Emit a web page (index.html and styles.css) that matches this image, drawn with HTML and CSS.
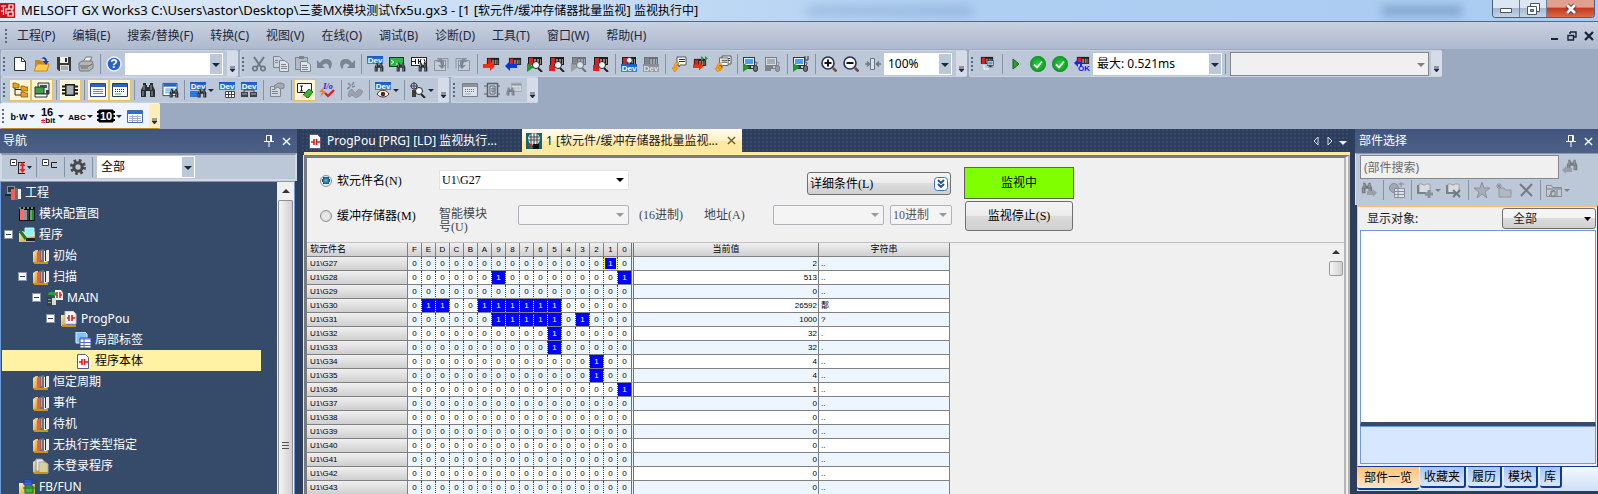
FILE: index.html
```
<!DOCTYPE html>
<html lang="zh-CN">
<head>
<meta charset="utf-8">
<title>MELSOFT GX Works3</title>
<link rel="stylesheet" href="styles.css">
</head>
<body>
<svg class="paints" aria-hidden="true">
  <defs>
    <linearGradient id="gold" x1="0" y1="0" x2="1" y2="1"><stop offset="0" stop-color="#fff0b0"/><stop offset="1" stop-color="#c9921c"/></linearGradient>
    <linearGradient id="blue" x1="0" y1="0" x2="0" y2="1"><stop offset="0" stop-color="#1d56c8"/><stop offset="1" stop-color="#2b8af0"/></linearGradient>
    <radialGradient id="green"><stop offset="0" stop-color="#2fd040"/><stop offset="1" stop-color="#0a9c22"/></radialGradient>
  </defs>
</svg>
<svg class="defs" aria-hidden="true">
  <symbol id="lens" viewBox="0 0 16 16"><path d="M11 12l4 4" stroke="#222" stroke-width="2"/><circle cx="9" cy="9" r="3.5" fill="#f4fbff" stroke="#222"/></symbol>
  <symbol id="bino" viewBox="0 0 16 16"><path d="M3 1h3v2h1v2h2V3h1V1h3v3l2 4v7h-5V9H6v6H1V8l2-4z" fill="#2a2d33"/><path d="M4 3v5M11 3v5M3 9v5M12 9v5" stroke="#9aa0a8"/></symbol>
  <symbol id="mod" viewBox="0 0 16 16"><path d="M1 1h14v8H1z" fill="#1c1c1c"/><path d="M2 2h4v7H2z" fill="#e02020"/><path d="M7 3h2v5H7zM10 3h2v5h-2zM13 3h1v5h-1z" fill="#8d8577"/></symbol>
  <symbol id="dev" viewBox="0 0 16 16"><path d="M0 0h16v8H0z" fill="url(#blue)"/><text x="8" y="7" text-anchor="middle" class="t-dev">Dev</text></symbol>
  <symbol id="pc" viewBox="0 0 16 16"><path d="M0 1h12v9H0zM4 10h4v2H4zM2 12h9v1H2z" fill="#30343c"/><path d="M1 2h10v7H1z" fill="#e8f2ff"/><path d="M2 3h8v5H2z" fill="#4aa0f0"/></symbol>
  <symbol id="sheets" viewBox="0 0 16 16"><path d="M6 1h9v8H9l-1 2V9H6z" fill="#fff" stroke="#555"/><path d="M8 3.500h6M8 5.500h6" stroke="#333"/><path d="M7 6C4 6 3 9 3 12H1l3 4 3-4H5c0-2 0-4 3-4z" fill="#ffb000" stroke="#e06a00" stroke-width=".6"/></symbol>
  <symbol id="new" viewBox="0 0 16 16"><path d="M2.500 1.500h7l4 4v9h-11z" fill="#fff" stroke="#333"/><path d="M9.500 1.500v4h4" fill="none" stroke="#333"/></symbol>
  <symbol id="open" viewBox="0 0 16 16"><path d="M1 4h5l1 1h6v10H1z" fill="#c98a14"/><path d="M0 15l3-7h12l-2 7z" fill="#ffc94e" stroke="#c98a14"/><path d="M7 3c2-3 6-2 6 2h2l-3 4-3-4h2c0-2-2-3-4-2z" fill="#1d3fae"/></symbol>
  <symbol id="save" viewBox="0 0 16 16"><path d="M1 1h14v14H3l-2-2z" fill="#3a3a34"/><path d="M4 1h8v6H4z" fill="#f0f0ea"/><path d="M9 2h2v4H9z" fill="#2a2a2a"/><path d="M4 9h9v6H4z" fill="#ddd"/><path d="M5 11h7M5 13h7" stroke="#777"/></symbol>
  <symbol id="print" viewBox="0 0 16 16"><path d="M5 6l3-5h6l-3 6z" fill="#eee" stroke="#777"/><path d="M1 7l3-2h10l1 3v4l-4 3H2l-1-2z" fill="#b4b4b4" stroke="#777"/><path d="M2 10h9l3-2M3 12h7" stroke="#666" fill="none"/></symbol>
  <symbol id="help" viewBox="0 0 16 16"><circle cx="8" cy="8" r="7" fill="#2860c8" stroke="#e8f0ff" stroke-width="1.500"/><text x="8" y="12" text-anchor="middle" class="t-help">?</text></symbol>
  <symbol id="cut" viewBox="0 0 16 16"><path d="M3 1l7 10M13 1L6 11" stroke="#707783" stroke-width="2"/><circle cx="4" cy="12.500" r="2.200" fill="none" stroke="#707783" stroke-width="1.700"/><circle cx="12" cy="12.500" r="2.200" fill="none" stroke="#707783" stroke-width="1.700"/></symbol>
  <symbol id="copy" viewBox="0 0 16 16"><path d="M.5.500h6l3 3v8h-9z" fill="#cdd3dc" stroke="#7d8592"/><path d="M6.500 4.500h5l4 3v8h-9z" fill="#dde2e9" stroke="#7d8592"/><path d="M8 8.500h5M8 10.500h6M8 12.500h6M2 4.500h3M2 6.500h3" stroke="#7d8592"/></symbol>
  <symbol id="paste" viewBox="0 0 16 16"><path d="M.5 1.500h12v12H.5z" fill="#b3bac5" stroke="#7d8592"/><path d="M4 0h5v3H4z" fill="#7d8592"/><path d="M5.500 5.500h6l4 3v7h-10z" fill="#dde2e9" stroke="#7d8592"/><path d="M7 9.500h5M7 11.500h6M7 13.500h6" stroke="#7d8592"/></symbol>
  <symbol id="undo" viewBox="0 0 16 16"><path d="M0 4v8h8L5.500 9.500C8 6 12 7 12 12l1 1c4-5 1-11-4-10C6 3 4 5 3 7z" fill="#7b8492"/></symbol>
  <symbol id="code" viewBox="0 0 16 16"><path d="M0 1h15v10H0z" fill="#123b1a"/><path d="M1 2h13v8H1z" fill="#28b845"/><path d="M2 4l3 2-3 2M7 8h4" stroke="#fff" fill="none"/></symbol>
  <symbol id="ladder" viewBox="0 0 16 16"><path d="M0 1h16v9H0z" fill="#222"/><path d="M1 2h14v7H1z" fill="#fff"/><path d="M1 5.500h3M4.500 3v5M7.500 3v5M8 5.500h2M10 3l-1 2.500 1 2.500M13 3l1 2.500-1 2.500" stroke="#111" fill="none"/></symbol>
  <symbol id="hist" viewBox="0 0 16 16"><path d="M1.500 4.500h11v10h-11z" fill="#c6ccd6" stroke="#8d95a2"/><path d="M4 2.500h11v10" fill="none" stroke="#8d95a2"/><path d="M3 6c2-4 7-4 8 0v3h2l-4 4-4-4h3c0-3-2-4-5-3z" fill="#7f8794"/></symbol>
  <symbol id="right" viewBox="0 0 16 16"><path d="M0 9h7V6l5 5-5 5v-3H0z" fill="#f23010"/></symbol>
  <symbol id="left" viewBox="0 0 16 16"><path d="M12 9H5V6l-5 5 5 5v-3h7z" fill="#0a36e0"/></symbol>
  <symbol id="play" viewBox="0 0 16 16"><path d="M0 7l7 4-7 5z" fill="#1d9a2a"/></symbol>
  <symbol id="stop" viewBox="0 0 16 16"><path d="M0 9h6v6H0z" fill="#f01818"/></symbol>
  <symbol id="mouse" viewBox="0 0 16 16"><path d="M12 6c3 0 2 2 1 3" stroke="#444" fill="none"/><rect x="10.500" y="9.500" width="4" height="6" rx="2" fill="#6a6f78" stroke="#333"/></symbol>
  <symbol id="zin" viewBox="0 0 16 16"><path d="M12 12l3.500 3.500" stroke="#7a4f2a" stroke-width="2.500"/><circle cx="7" cy="7" r="6" fill="#f6f8fb" stroke="#2b2f55" stroke-width="1.600"/><path d="M3.500 7h7M7 3.500v7" stroke="#111" stroke-width="2"/></symbol>
  <symbol id="zout" viewBox="0 0 16 16"><path d="M12 12l3.500 3.500" stroke="#7a3f5a" stroke-width="2.500"/><circle cx="7" cy="7" r="6" fill="#f6f8fb" stroke="#2b2f55" stroke-width="1.600"/><path d="M3.500 7h7" stroke="#111" stroke-width="2"/></symbol>
  <symbol id="fit" viewBox="0 0 16 16"><path d="M5.500 2.500h4v11h-4z" fill="#dde2e9" stroke="#6c7480"/><path d="M0 8h4M2 5.500L4.500 8 2 10.500M16 8h-4M14 5.500L11.500 8l2.500 2.500" stroke="#6c7480" fill="none" stroke-width="1.400"/></symbol>
  <symbol id="run" viewBox="0 0 16 16"><path d="M5 3l6 5-6 5z" fill="#2f9a28" stroke="#14601a"/></symbol>
  <symbol id="ok" viewBox="0 0 16 16"><circle cx="8" cy="8" r="7.700" fill="url(#green)" stroke="#088020" stroke-width=".6"/><path d="M4 8.500l3 3 5-6" fill="none" stroke="#fff" stroke-width="1.800"/></symbol>
  <symbol id="tree" viewBox="0 0 16 16"><path d="M3 5v8h7M3 7.500h7" stroke="#222" fill="none"/><path d="M1 1h3l1 1h2v4H1zM9 4h3l1 1h3v4H9zM9 10h3l1 1h3v4H9z" fill="#f0a010" stroke="#7a4a00" stroke-width=".7"/></symbol>
  <symbol id="out" viewBox="0 0 16 16"><path d="M4 1h11v11H4z" fill="#dfe6ea" stroke="#333"/><path d="M6 3h7v3H6z" fill="#555"/><path d="M1 5h9v7H1z" fill="#39a04a" stroke="#333"/><path d="M1 12h12v3H1z" fill="#fff" stroke="#333"/><path d="M12 8h3v4h-3z" fill="#3b4046"/></symbol>
  <symbol id="chip" viewBox="0 0 16 16"><path d="M0 4.500h16M0 8h16M0 11.500h16" stroke="#1c1c1c" stroke-width="2"/><path d="M3 2h10v12H3z" fill="#1c1c1c"/><path d="M4.500 3.500h7v9h-7z" fill="#a9aeb4"/></symbol>
  <symbol id="win" viewBox="0 0 16 16"><path d="M.5 1.500h15v13H.5z" fill="#fff" stroke="#2b4a80"/><path d="M1 2h14v3H1z" fill="#2c63c8"/><path d="M3 7.500h10M3 9.500h10M3 11.500h10" stroke="#28a4dd"/></symbol>
  <symbol id="wind" viewBox="0 0 16 16"><path d="M.5 1.500h15v13H.5z" fill="#fff" stroke="#2b3a50"/><path d="M1 2h14v3H1z" fill="#2c63c8"/><path d="M3 7.500h10M3 9.500h10" stroke="#333" stroke-dasharray="1 1"/><path d="M3 12h6" stroke="#2ab040"/></symbol>
  <symbol id="grid" viewBox="0 0 16 16"><path d="M.5 2.500h15v12H.5z" fill="#fff" stroke="#4669a8"/><path d="M1 3h14v3H1z" fill="#2c6cdc"/><path d="M2 8.500h12M2 10.500h12M2 12.500h12M5.500 7v7M10.500 7v7" stroke="#a3b2cb"/></symbol>
  <symbol id="prop" viewBox="0 0 16 16"><path d="M1.500 4.500h10v10h-10z" fill="#d2d7df" stroke="#7f8794"/><path d="M3 7.500h3M3 9.500h6M3 11.500h6" stroke="#7f8794"/><path d="M5 4l4-3h3l3 1v4l-4 1-2-2-3 2z" fill="#a2a9b5" stroke="#7f8794"/></symbol>
  <symbol id="edit" viewBox="0 0 16 16"><path d="M.5 1.500h14v9H.5z" fill="#fff" stroke="#222"/><path d="M3 4h3M3 9h3M4.500 4v5" stroke="#222"/><path d="M6 13l6-6 4 3-5 6z" fill="#35b62c" stroke="#1a6a18"/><path d="M5 12l-1 4 5-1z" fill="#f5d9a0"/></symbol>
  <symbol id="io" viewBox="0 0 16 16"><text x="9" y="7" text-anchor="middle" class="t-io">I/o</text><path d="M5 5L0 10h3l-2 5 6-6H4z" fill="#ff7a10"/><path d="M6 11l3 3 6-6" fill="none" stroke="#e01818" stroke-width="2.200"/></symbol>
  <symbol id="hand" viewBox="0 0 16 16"><path d="M1 1l3 3M7 0L5 3M0 7l3-2M5 5l3-1" stroke="#838b98" stroke-width="1.600"/><path d="M1 14l1-5 3-2 3 4 4-4 4 2-2 4-5 3-4-3-2 2z" fill="#9ba2ae" stroke="#7f8794" stroke-width=".6"/></symbol>
  <symbol id="eye" viewBox="0 0 16 16"><path d="M2 12c3-5 9-5 12 0-3 4-9 4-12 0z" fill="#fff" stroke="#4a2a20"/><circle cx="8" cy="12" r="2.300" fill="#4a2a20"/></symbol>
  <symbol id="target" viewBox="0 0 16 16"><circle cx="4" cy="4" r="3" fill="none" stroke="#3c434e"/><path d="M0 4h8M4 0v8" stroke="#3c434e"/><path d="M2 8h4v7H2z" fill="#3f3e30"/></symbol>
  <symbol id="net" viewBox="0 0 16 16"><path d="M0 10h7v5H0zM9 10h7v5H9z" fill="#3b4048"/><path d="M3 10v-2h10v2" fill="none" stroke="#3b4048"/><path d="M1 12h5M10 12h5" stroke="#b5bcc6"/></symbol>
  <symbol id="sock" viewBox="0 0 16 16"><path d="M3.500 1.500h10v13h-10z" fill="#c5ccd6" stroke="#59616d" stroke-width="1.500"/><path d="M6 4h5v8H6z" fill="#e4e7ec" stroke="#59616d"/><path d="M8 6h2v4H8zM0 4h3M0 12h3M14 4h2M14 12h2" stroke="#59616d" fill="none"/></symbol>
  <symbol id="plc" viewBox="0 0 16 16"><path d="M2 1h8v8H2z" fill="#8a9099"/><path d="M3 2h6v5H3z" fill="#30343c"/><path d="M0 9h6v2H0z" fill="#22252b"/><path d="M6 4h4v11H6z" fill="#ff5a5a"/><path d="M10 3h3v12h-3z" fill="#6c6f66"/><path d="M13 4h3v10h-3z" fill="#eceef0"/></symbol>
  <symbol id="rack" viewBox="0 0 16 16"><path d="M0 1h16v14H0z" fill="#101418"/><path d="M1 3h4v11H1z" fill="#ff6a6a"/><path d="M5 4h3v10H5z" fill="#8f9298"/><path d="M8 4h2v10H8z" fill="#3a3d42"/><path d="M11 4h4v10h-4z" fill="#1e8a3c"/><path d="M12 4v10" stroke="#8fd8a0"/><path d="M0 2h16" stroke="#dfe6ea" stroke-dasharray="2 2"/></symbol>
  <symbol id="prog" viewBox="0 0 16 16"><path d="M0 4h4l1 1h11v10H0z" fill="url(#gold)"/><path d="M6 1h9v8H6z" fill="#8ff0ff" stroke="#d8ecf0"/><path d="M7 11h9v3H7z" fill="#222"/><path d="M1 4l6 8" stroke="#1f7a2c" stroke-width="3"/></symbol>
  <symbol id="fold" viewBox="0 0 16 16"><path d="M0 4l3-2h2v13H1l-1-1z" fill="url(#gold)"/><path d="M4 4l3-2v12H4z" fill="#ff5050"/><path d="M7 2l4-1v13H7z" fill="#77736a"/><path d="M8.500 3v9" stroke="#aaa79e"/><path d="M11 3l3-1h2v11l-3 1h-2z" fill="#e9ebee"/><path d="M12.500 2v11" stroke="#2a2a2a"/><path d="M1 15h14" stroke="#c9921c" stroke-width="2"/></symbol>
  <symbol id="main" viewBox="0 0 16 16"><path d="M8 0h6l2 3v7H8z" fill="#f4f4f4"/><path d="M10 2v6M13 2v6M9 5h1M13 5h2" stroke="#e01818" stroke-width="1.500"/><path d="M0 7h5v9H0z" fill="#3a3d42"/><path d="M1 9.500h3M1 12.500h3" stroke="#9a9a90"/><path d="M5 8h4v7H5z" fill="#d6d8da"/><path d="M1 5c0-4 4-3 6-3V1l3 3-3 3V5z" fill="#22a038"/></symbol>
  <symbol id="pou" viewBox="0 0 16 16"><path d="M0 4h4l1 1v10H0z" fill="url(#gold)"/><path d="M1 14h14v2H1z" fill="#c9921c"/><path d="M4 0h8l3 3v10H4z" fill="#f7f7f9" stroke="#b8bcc8"/><path d="M6 7h2M8 4v6M11 4v6M11 7h3" stroke="#e01818" stroke-width="1.600"/></symbol>
  <symbol id="label" viewBox="0 0 16 16"><path d="M1 0h9l2 2v9H1z" fill="#7cc4f4" stroke="#e6f2ff"/><path d="M5 6h11v10H5z" fill="#fff" stroke="#3048b0"/><path d="M5 7h11M5 10.500h11M5 13.500h11M9 6v10" stroke="#5468d0"/></symbol>
  <symbol id="body" viewBox="0 0 16 16"><path d="M2.500 1.500h8l3 3v11h-11z" fill="#fff" stroke="#555d80"/><path d="M4 9h3M7 6v6M9.500 6v6M10 9h3" stroke="#e01818" stroke-width="1.600"/></symbol>
  <symbol id="unreg" viewBox="0 0 16 16"><path d="M0 4l3-2h2v13H1l-1-1z" fill="url(#gold)"/><path d="M3 1h6l2 2v10H3z" fill="#e8e8e8" stroke="#999"/><path d="M6 4h6l3 2v9H6z" fill="#d8cf9c" stroke="#aaa"/><path d="M1 15h14" stroke="#c9921c" stroke-width="2"/></symbol>
  <symbol id="fb" viewBox="0 0 16 16"><path d="M0 4h4l1 1h11v11H0z" fill="url(#gold)"/><path d="M5 1h8v5H5zM3 3h12" fill="#4068e0" stroke="#2040a0"/><path d="M6 7h8v7H6zM4 9h12" fill="#48b048" stroke="#1a6a20"/></symbol>
  <symbol id="expand" viewBox="0 0 22 16"><path d="M.5.500h6v6h-6z" fill="#fff" stroke="#444"/><path d="M2 3.500h3" stroke="#222"/><path d="M8 3.500h7M8.500 3v12M8 14.500h7" stroke="#222" fill="none"/><path d="M12.500 3l3 4h-2v3h2l-3 4-3-4h2V7h-2z" fill="#f02010"/><path d="M17 7h5l-2.500 3z" fill="#1b293e"/></symbol>
  <symbol id="collapse" viewBox="0 0 16 16"><path d="M.5.500h6v6h-6z" fill="#fff" stroke="#444"/><path d="M2 3.500h3M15 3.500H9.500v5H15" stroke="#222" fill="none"/></symbol>
  <symbol id="gear" viewBox="0 0 16 16"><circle cx="8" cy="8" r="6.500" fill="none" stroke="#45474a" stroke-width="3" stroke-dasharray="2.600 2.500"/><circle cx="8" cy="8" r="4.200" fill="none" stroke="#45474a" stroke-width="3"/></symbol>
  <symbol id="pin" viewBox="0 0 10 12"><path d="M2.500.500h5v6h-5zM6.500 1v5M0 6.500h10M5 7v5" fill="none" stroke="currentColor"/></symbol>
  <symbol id="x" viewBox="0 0 10 10"><path d="M1 1l8 8M9 1L1 9" stroke="currentColor" stroke-width="1.500"/></symbol>
  <symbol id="star" viewBox="0 0 16 16"><path d="M8 0l2 6h6l-5 4 2 6-5-4-5 4 2-6-5-4h6z" fill="#a9afba" stroke="#8a919c"/></symbol>
  <symbol id="nfold" viewBox="0 0 16 16"><path d="M3 6h5l1 2h6v7H3z" fill="#b4b9c1" stroke="#9096a0"/><path d="M0 4h6M3 1v6M1 2l4 4M5 2L1 6" stroke="#8a919c"/></symbol>
  <symbol id="del" viewBox="0 0 16 16"><path d="M2 2l12 12M14 2L3 14" stroke="#757b85" stroke-width="2"/></symbol>
  <symbol id="globe" viewBox="0 0 16 16"><circle cx="5" cy="6" r="4.500" fill="#a3a9b3" stroke="#868d98"/><path d="M5.500 6.500h10v9h-10z" fill="#dfe2e7" stroke="#868d98"/><path d="M6 9.500h9M6 12.500h9M9 7v8M9 2h6M12 0v5" stroke="#868d98"/></symbol>
  <symbol id="book" viewBox="0 0 16 16"><path d="M2 2h3l1 1h2l1-1h4v9H2z" fill="#d9dde3" stroke="#9aa1ac"/><path d="M1 3v8h7l2 2" stroke="#7a818c" stroke-width="2" fill="none"/></symbol>
  <symbol id="fdim" viewBox="0 0 16 16"><path d="M.5 3.500h5l1 2h9v9H.5z" fill="#c6cbd3" stroke="#868d98"/><path d="M1 7h14M5 9h4v5H5zM11 8v6M3 14l5-6" stroke="#737a85" fill="none"/></symbol>
  <symbol id="devmon" viewBox="0 0 16 16"><path d="M0 0h16v16H0z" fill="#0c6a6a"/><circle cx="8" cy="6" r="6" fill="#e6e9ec"/><path d="M3 4h10M2 7h12M5 1v10M8 0v11M11 1v10" stroke="#444"/><path d="M3 11h3v4H3z" fill="#f01818"/><path d="M7 11h6v5H7z" fill="#111"/></symbol>
</svg>

<header class="title">
  <svg class="logo" viewBox="0 0 15 15"><path d="M0 0h15v15H0z" fill="#c8141c"/><path d="M1 3h5M3.500 3v9M1 8h3M9 2h4v4H9zM8 9h5v4H8zM6 11V6h6v3" fill="none" stroke="#fff" stroke-width="1.200"/></svg>
  <h1>MELSOFT GX Works3 C:\Users\astor\Desktop\<span>三菱</span>MX<span>模块测试</span>\fx5u.gx3 - [1 [<span>软元件/缓冲存储器批量监视</span>] <span>监视执行中</span>]</h1>
  <i class="ghost wide"></i><i class="ghost"></i>
  <div class="winbtns">
    <button aria-label="最小化"><svg viewBox="0 0 14 12"><path d="M1.500 5.500h11v4h-11z" fill="#fff" stroke="#4a5468"/></svg></button><button aria-label="还原"><svg viewBox="0 0 14 12"><path d="M4.500.500h9v8h-9z" fill="#fff" stroke="#4a5468"/><path d="M1.500 3.500h9v8h-9z" fill="#fff" stroke="#4a5468"/><path d="M4.500 6.500h3v2h-3z" fill="#8ca0b8" stroke="#4a5468"/></svg></button><button class="close" aria-label="关闭"><svg viewBox="0 0 14 12"><path d="M3 2l8 8M11 2l-8 8" stroke="#5a2a2a" stroke-width="4.500"/><path d="M3 2l8 8M11 2l-8 8" stroke="#fff" stroke-width="2.800"/></svg></button>
  </div>
</header>

<nav class="menu">
  <i class="grip"></i>
  <button>工程(P)</button><button>编辑(E)</button><button>搜索/替换(F)</button><button>转换(C)</button><button>视图(V)</button><button>在线(O)</button><button>调试(B)</button><button>诊断(D)</button><button>工具(T)</button><button>窗口(W)</button><button>帮助(H)</button>
  <div class="mdi">
    <button aria-label="最小化窗口"><svg viewBox="0 0 10 10"><path d="M1 8h7" stroke="#14223c" stroke-width="2"/></svg></button>
    <button aria-label="还原窗口"><svg viewBox="0 0 10 10"><path d="M3 1h6v5H7M3 3V1M1 4.500h5.500v4.500H1z" fill="none" stroke="#14223c" stroke-width="1.400"/></svg></button>
    <button aria-label="关闭窗口"><svg viewBox="0 0 10 10"><path d="M1 1l8 8M9 1L1 9" stroke="#14223c" stroke-width="2.200"/></svg></button>
  </div>
</nav>

<div class="bars">
  <div class="row">
    <div class="strip">
      <i class="grip"></i>
      <button class="tb" aria-label="新建"><svg><use href="#new"/></svg></button><button class="tb" aria-label="打开"><svg><use href="#open"/></svg></button><button class="tb" aria-label="保存"><svg><use href="#save"/></svg></button><button class="tb" aria-label="打印"><svg><use href="#print"/></svg></button><i class="sep"></i><button class="tb" aria-label="帮助"><svg><use href="#help"/></svg></button>
      <select class="combo w-find" aria-label="查找内容"><option></option></select>
      <button class="more" aria-label="更多"></button>
    </div>
    <div class="strip">
      <i class="grip"></i>
      <button class="tb" aria-label="剪切"><svg><use href="#cut"/></svg></button><button class="tb" aria-label="复制"><svg><use href="#copy"/></svg></button><button class="tb" aria-label="粘贴"><svg><use href="#paste"/></svg></button><button class="tb" aria-label="撤消"><svg><use href="#undo"/></svg></button><button class="tb" aria-label="恢复"><svg class="flip"><use href="#undo"/></svg></button><i class="sep"></i>
      <button class="tb" aria-label="软元件搜索"><svg viewBox="0 0 16 16"><use href="#dev" width="16" height="16"/><use href="#bino" x="7" y="6" width="10" height="10"/></svg></button><button class="tb" aria-label="指令搜索"><svg viewBox="0 0 16 16"><use href="#code" width="16" height="16"/><use href="#bino" x="7" y="6" width="10" height="10"/></svg></button><button class="tb" aria-label="触点线圈搜索"><svg viewBox="0 0 16 16"><use href="#ladder" width="16" height="16"/><use href="#bino" x="7" y="6" width="10" height="10"/></svg></button><button class="tb" aria-label="后退"><svg><use href="#hist"/></svg></button><button class="tb" aria-label="前进"><svg class="flip"><use href="#hist"/></svg></button><i class="sep"></i>
      <button class="tb" aria-label="写入"><svg viewBox="0 0 16 16"><use href="#mod" x="3" width="14" height="16"/><use href="#right" width="16" height="16" y="-1"/></svg></button><button class="tb" aria-label="读取"><svg viewBox="0 0 16 16"><use href="#mod" x="3" width="14" height="16"/><use href="#left" width="16" height="16" y="-1"/></svg></button><button class="tb" aria-label="监视开始"><svg viewBox="0 0 16 16"><use href="#mod" width="16" height="16"/><use href="#play" width="16" height="16"/><use href="#lens" width="16" height="16"/></svg></button><button class="tb" aria-label="监视停止"><svg viewBox="0 0 16 16"><use href="#mod" width="16" height="16"/><use href="#stop" width="16" height="16"/><use href="#lens" width="16" height="16"/></svg></button><button class="tb off" aria-label="全部监视开始"><svg viewBox="0 0 16 16"><use href="#mod" width="16" height="16"/><use href="#play" width="16" height="16"/><use href="#lens" width="16" height="16"/></svg></button><button class="tb" aria-label="全部监视停止"><svg viewBox="0 0 16 16"><use href="#mod" width="16" height="16"/><use href="#stop" width="16" height="16"/><use href="#lens" width="16" height="16"/></svg></button><i class="sep"></i>
      <button class="tb" aria-label="软元件监视"><svg viewBox="0 0 16 16"><use href="#mod" width="16" height="16"/><use href="#lens" width="15" height="13" y="-3"/><use href="#dev" y="8" width="16" height="16"/></svg></button><button class="tb off" aria-label="软元件编辑"><svg viewBox="0 0 16 16"><use href="#mod" width="16" height="16"/><use href="#dev" y="8" width="16" height="16"/></svg></button><i class="sep"></i>
      <button class="tb" aria-label="转换"><svg><use href="#sheets"/></svg></button><button class="tb" aria-label="在线转换"><svg viewBox="0 0 16 16"><use href="#mod" y="2" width="14" height="14"/><use href="#right" width="14" height="15"/><path d="M8 0l3 2.500L8 5zM12 0l3 2.500L12 5z" fill="#1aa02a"/></svg></button><button class="tb" aria-label="全部转换"><svg viewBox="0 0 16 16"><use href="#sheets" x="1" y="-1" width="16" height="16"/><use href="#sheets" x="-1" y="1" width="15" height="15"/></svg></button><i class="sep"></i>
      <button class="tb" aria-label="模拟开始"><svg viewBox="0 0 16 16"><use href="#pc" width="16" height="16"/><use href="#play" width="16" height="16"/><use href="#mouse" width="16" height="16"/></svg></button><button class="tb off" aria-label="模拟停止"><svg viewBox="0 0 16 16"><use href="#pc" width="16" height="16"/><use href="#stop" width="16" height="16"/><use href="#mouse" width="16" height="16"/></svg></button><i class="sep"></i>
      <button class="tb" aria-label="模拟设置"><svg viewBox="0 0 16 16"><use href="#pc" width="16" height="16"/><use href="#play" width="16" height="16"/><use href="#mouse" width="16" height="16"/><path d="M12 0v4M15 0v4M12 4h3" stroke="#333" fill="none"/></svg></button><i class="sep"></i>
      <button class="tb" aria-label="放大"><svg><use href="#zin"/></svg></button><button class="tb" aria-label="缩小"><svg><use href="#zout"/></svg></button><button class="tb" aria-label="适应宽度"><svg><use href="#fit"/></svg></button>
      <select class="combo w-zoom" aria-label="缩放比例"><option>100%</option></select>
      <button class="more" aria-label="更多"></button>
    </div>
    <div class="strip">
      <i class="grip"></i>
      <button class="tb" aria-label="连接目标"><svg viewBox="0 0 16 16"><use href="#mod" width="14" height="14"/><use href="#pc" x="7" y="4" width="9" height="9"/><path d="M4 9v4h5" fill="none" stroke="#fff"/></svg></button><i class="sep"></i><button class="tb" aria-label="运行"><svg><use href="#run"/></svg></button><button class="tb" aria-label="状态 1"><svg><use href="#ok"/></svg></button><button class="tb" aria-label="状态 2"><svg><use href="#ok"/></svg></button><button class="tb" aria-label="通信正常"><svg viewBox="0 0 16 16"><use href="#mod" x="2" width="14" height="14"/><path d="M0 7l4-4v3h4v5H6V8H4v3z" fill="#1030e0"/><text x="10" y="15" text-anchor="middle" class="t-ok">OK</text></svg></button>
      <select class="combo w-scan" aria-label="扫描时间"><option>最大: 0.521ms</option></select><i class="sep"></i>
      <select class="combo gray" aria-label="状态信息" disabled><option></option></select>
      <button class="more tight" aria-label="更多"></button>
    </div>
  </div>
  <div class="row">
    <div class="strip">
      <i class="grip"></i>
      <button class="tb on" aria-label="导航窗口"><svg><use href="#tree"/></svg></button><button class="tb on" aria-label="连接窗口"><svg><use href="#out"/></svg></button><i class="sep"></i><button class="tb on" aria-label="部件选择窗口"><svg><use href="#chip"/></svg></button><i class="sep"></i><button class="tb on" aria-label="输出窗口"><svg><use href="#win"/></svg></button><button class="tb on" aria-label="进度窗口"><svg><use href="#wind"/></svg></button><i class="sep"></i>
      <button class="tb" aria-label="搜索"><svg><use href="#bino"/></svg></button><button class="tb" aria-label="搜索结果"><svg viewBox="0 0 16 16"><use href="#win" width="16" height="15"/><use href="#bino" x="7" y="6" width="10" height="10"/></svg></button><i class="sep"></i>
      <button class="tb dd" aria-label="交叉参照"><svg viewBox="0 0 16 16"><use href="#dev" width="16" height="16"/><path d="M0 9h8v6H0z" fill="#2878e0"/><use href="#bino" x="7" y="6" width="10" height="10"/></svg></button><button class="tb" aria-label="软元件列表"><svg viewBox="0 0 16 16"><use href="#dev" width="16" height="16"/><path d="M6.500 9.500h9v6h-9zM6 12.500h10M9.500 9v6M12.500 9v6" fill="#fff" stroke="#444"/></svg></button><button class="tb" aria-label="软元件分配"><svg viewBox="0 0 16 16"><use href="#dev" width="16" height="16"/><use href="#net" width="16" height="16"/></svg></button><i class="sep"></i>
      <button class="tb" aria-label="属性"><svg><use href="#prop"/></svg></button><i class="sep"></i><button class="tb on" aria-label="编辑模式"><svg><use href="#edit"/></svg></button><button class="tb" aria-label="I/O 检查"><svg><use href="#io"/></svg></button><i class="sep"></i><button class="tb" aria-label="手动"><svg><use href="#hand"/></svg></button><i class="sep"></i>
      <button class="tb dd" aria-label="软元件显示"><svg viewBox="0 0 16 16"><use href="#dev" width="16" height="16"/><use href="#eye" width="16" height="16"/></svg></button><i class="sep"></i><button class="tb dd" aria-label="定位"><svg viewBox="0 0 16 16"><use href="#target" width="16" height="16"/><use href="#lens" width="16" height="16"/></svg></button>
      <button class="more tight" aria-label="更多"></button>
    </div>
    <div class="strip">
      <i class="grip"></i>
      <button class="tb off" aria-label="表示"><svg><use href="#wind"/></svg></button><button class="tb" aria-label="模块"><svg><use href="#sock"/></svg></button><button class="tb off" aria-label="查找表"><svg viewBox="0 0 16 16"><use href="#grid" x="5" y="-1" width="11" height="12"/><use href="#bino" y="3" width="9" height="13"/></svg></button>
      <button class="more tight" aria-label="更多"></button>
    </div>
  </div>
  <div class="row">
    <div class="strip lit">
      <i class="grip"></i>
      <button class="tb dd" aria-label="位/字"><svg viewBox="0 0 16 16"><text x="8" y="12" text-anchor="middle" class="t-md">b·W</text></svg></button><button class="tb dd" aria-label="16 位"><svg viewBox="0 0 16 16"><text x="7" y="8" text-anchor="middle" class="t-lg">16</text><text x="8" y="15" text-anchor="middle" class="t-sm"><tspan fill="#e01818">±</tspan>bit</text></svg></button><button class="tb dd" aria-label="字符"><svg viewBox="0 0 16 16"><text x="8" y="12" text-anchor="middle" class="t-abc">ABC</text></svg></button><button class="tb dd" aria-label="十进制"><svg viewBox="0 0 16 16"><path d="M1 2h14v12H1z" stroke="#000"/><path d="M0 3v10M16 3v10" stroke="#000" stroke-width="2" stroke-dasharray="2 2"/><text x="8" y="12" text-anchor="middle" class="t-ten">10</text></svg></button><button class="tb" aria-label="表格"><svg><use href="#grid"/></svg></button>
      <button class="more" aria-label="更多"></button>
    </div>
  </div>
</div>

<div class="work">
  <aside class="nav">
    <header class="phead"><h2>导航</h2><button aria-label="固定"><svg class="pin"><use href="#pin"/></svg></button><button aria-label="关闭导航"><svg class="ex"><use href="#x"/></svg></button></header>
    <div class="navbar">
      <button class="nb wide" aria-label="展开"><svg><use href="#expand"/></svg></button><i class="sep"></i><button class="nb" aria-label="折叠"><svg><use href="#collapse"/></svg></button><i class="sep"></i><button class="nb" aria-label="设置"><svg><use href="#gear"/></svg></button><i class="sep"></i>
      <select class="combo w-all" aria-label="显示范围"><option>全部</option></select>
    </div>
    <div class="treebox">
      <ul class="tree">
        <li class="l0"><svg><use href="#plc"/></svg>工程</li>
        <li class="l1"><i class="tg"></i><svg><use href="#rack"/></svg>模块配置图</li>
        <li class="l1"><i class="tg box"></i><svg><use href="#prog"/></svg>程序</li>
        <li class="l2"><i class="tg"></i><svg><use href="#fold"/></svg>初始</li>
        <li class="l2"><i class="tg box"></i><svg><use href="#fold"/></svg>扫描</li>
        <li class="l3"><i class="tg box"></i><svg><use href="#main"/></svg>MAIN</li>
        <li class="l4"><i class="tg box"></i><svg><use href="#pou"/></svg>ProgPou</li>
        <li class="l5"><i class="tg"></i><svg><use href="#label"/></svg>局部标签</li>
        <li class="l5 sel"><i class="tg"></i><svg><use href="#body"/></svg>程序本体</li>
        <li class="l2"><i class="tg"></i><svg><use href="#fold"/></svg>恒定周期</li>
        <li class="l2"><i class="tg"></i><svg><use href="#fold"/></svg>事件</li>
        <li class="l2"><i class="tg"></i><svg><use href="#fold"/></svg>待机</li>
        <li class="l2"><i class="tg"></i><svg><use href="#fold"/></svg>无执行类型指定</li>
        <li class="l2"><i class="tg"></i><svg><use href="#unreg"/></svg>未登录程序</li>
        <li class="l1"><i class="tg"></i><svg><use href="#fb"/></svg>FB/FUN</li>
      </ul>
      <div class="sbar"><i class="up"></i><i class="thumb"></i></div>
    </div>
  </aside>

  <main class="doc">
    <div class="tabs">
      <button class="tab"><svg><use href="#body"/></svg>ProgPou [PRG] [LD] 监视执行...</button>
      <button class="tab cur"><svg><use href="#devmon"/></svg>1 [软元件/缓冲存储器批量监视...<svg class="ex"><use href="#x"/></svg></button>
      <div class="tabnav"><svg viewBox="0 0 34 10"><path d="M5 1v8L1 5zM15 1v8l4-4z" fill="none" stroke="#d5dbe6"/><path d="M26 5h8l-4 4z" fill="#e8ecf2"/></svg></div>
    </div>
    <div class="page">
      <form class="form">
        <label class="f-name"><input type="radio" name="kind" checked>软元件名(N)</label>
        <select class="fs dev" aria-label="软元件名"><option>U1\G27</option></select>
        <button type="button" class="detail">详细条件(L)<svg viewBox="0 0 14 14"><rect x=".5" y=".5" width="13" height="13" rx="3" fill="#fff" stroke="#2f78c8"/><path d="M4 3l3 3 3-3M4 7l3 3 3-3" fill="none" stroke="#1b4f94" stroke-width="1.800"/></svg></button>
        <output class="mon">监视中</output>
        <label class="f-buf"><input type="radio" name="kind">缓冲存储器(M)</label>
        <div class="f-row">
          <label class="dim mod" for="unit">智能模块号(U)</label><select class="fs unit" id="unit" disabled><option></option></select><span class="dim hex">(16进制)</span>
          <label class="dim" for="addr">地址(A)</label>
        </div>
        <div class="f-addr"><select class="fs unit" id="addr" disabled><option></option></select><select class="fs radix" aria-label="进制" disabled><option>10进制</option></select></div>
        <button type="button" class="halt">监视停止(S)</button>
      </form>
      <div class="gridbox">
        <div class="scroll">
        <table>
          <colgroup><col class="c-dev"><col span="15" class="c-bit"><col class="c-last"><col class="c-val"><col class="c-str"></colgroup>
          <thead><tr><th>软元件名</th><th>F</th><th>E</th><th>D</th><th>C</th><th>B</th><th>A</th><th>9</th><th>8</th><th>7</th><th>6</th><th>5</th><th>4</th><th>3</th><th>2</th><th>1</th><th>0</th><th>当前值</th><th>字符串</th></tr></thead>
          <tbody id="rows"></tbody>
        </table>
        </div>
        <div class="sbar flat"><i class="up"></i><i class="thumb"></i></div>
      </div>
    </div>
  </main>

  <aside class="parts">
    <header class="phead"><h2>部件选择</h2><button aria-label="固定"><svg class="pin"><use href="#pin"/></svg></button><button aria-label="关闭部件选择"><svg class="ex"><use href="#x"/></svg></button></header>
    <div class="pbar">
      <div class="prow"><input type="text" placeholder="(部件搜索)" aria-label="部件搜索"><button class="tb off" aria-label="搜索部件"><svg viewBox="0 0 16 16"><use href="#bino" x="4" width="12" height="12"/><path d="M0 11l4-4v2h6v4H4v2z" fill="#777"/></svg></button></div>
      <div class="prow"><button class="tb off" aria-label="下一个"><svg viewBox="0 0 16 16"><use href="#bino" width="12" height="12"/><path d="M16 11l-4-4v2H6v4h6v2z" fill="#777"/></svg></button><i class="sep"></i><button class="tb" aria-label="在线"><svg><use href="#globe"/></svg></button><i class="sep"></i><button class="tb dd dimmed" aria-label="添加"><svg viewBox="0 0 16 16"><use href="#book" width="16" height="16"/><path d="M12 8v8M8 12h8" stroke="#8a919c" stroke-width="3"/></svg></button><button class="tb" aria-label="移除"><svg viewBox="0 0 16 16"><use href="#book" width="16" height="16"/><path d="M7 8l7 7M14 8l-7 7" stroke="#737a85" stroke-width="2"/></svg></button><i class="sep"></i><button class="tb" aria-label="收藏"><svg><use href="#star"/></svg></button><button class="tb" aria-label="新建文件夹"><svg><use href="#nfold"/></svg></button><button class="tb" aria-label="删除"><svg><use href="#del"/></svg></button><i class="sep"></i><button class="tb dd dimmed" aria-label="显示"><svg><use href="#fdim"/></svg></button></div>
    </div>
    <div class="pbody">
      <div class="ptop"><label for="target-sel">显示对象:</label><select id="target-sel"><option>全部</option></select></div>
      <div class="plist"></div>
      <div class="pinfo"></div>
    </div>
    <div class="ptabs"><button class="cur">部件一览</button><button>收藏夹</button><button>履历</button><button>模块</button><button>库</button></div>
  </aside>
</div>
<script src="rows.js"></script>
</body>
</html>
```
FILE: styles.css
```
* { box-sizing: border-box; }
body {
  margin: 0; height: 100vh; overflow: hidden; display: flex; flex-direction: column;
  background: #9baac1; color: #1b1b1b;
  font: 12px/16px "Noto Sans", "Noto Sans CJK SC", sans-serif;
}
button, select, input { font: inherit; color: inherit; margin: 0; }
button { border: 0; padding: 0; background: none; }
select { appearance: none; border-radius: 0; opacity: 1; }
h1, h2 { margin: 0; font: inherit; }
i { font-style: normal; flex: none; }
svg { flex: none; display: block; }
.paints { position: absolute; width: 0; height: 0; }
.defs { display: none; }

.t-dev { font: bold 8px "Liberation Sans", sans-serif; fill: #fff; }
.t-help { font: bold 12px "Liberation Sans", sans-serif; fill: #fff; }
.t-io { font: italic bold 8px "Liberation Serif", serif; fill: #1a20c0; }
.t-ok { font: bold 8px "Liberation Sans", sans-serif; fill: #1020e0; }
.t-md { font: bold 9px "Liberation Sans", sans-serif; }
.t-abc { font: bold 8px "Liberation Sans", sans-serif; }
.t-lg { font: bold 11px "Liberation Sans", sans-serif; }
.t-sm { font: bold 8px "Liberation Sans", sans-serif; }
.t-ten { font: bold 11px "Liberation Sans", sans-serif; fill: #fff; }

/* title bar */
.title {
  display: flex; align-items: center; height: 22px; flex: none; padding-right: 3px;
  border-bottom: 1px solid #566880;
  background: linear-gradient(90deg, #dfeaf7, #c3dbf4 40%, #aecff2 60%, #aaccf0);
}
.logo { width: 15px; height: 15px; margin-right: 6px; }
.title h1 { font-size: 13px; color: #000; white-space: nowrap; flex: 1; }
.title h1 span { font-size: 12px; }
.ghost { width: 80px; height: 10px; margin-right: 30px; background: #6488b4; filter: blur(5px); opacity: .6; }
.ghost.wide { width: 165px; margin-right: 410px; opacity: .3; }
.winbtns { display: flex; align-self: flex-start; border: 1px solid #4d6078; border-top: 0; border-radius: 0 0 4px 4px; overflow: hidden; }
.winbtns button { width: 27px; height: 17px; display: flex; justify-content: center; align-items: center; border-right: 1px solid #6c7f98; background: linear-gradient(#dbe6f2 45%, #a5b8cf 50%, #c5d6e8); }
.winbtns button.close { width: 47px; border-right: 0; background: linear-gradient(#e0a090 40%, #c33a20 50%, #d86a48); }
.winbtns svg { width: 14px; height: 12px; }

/* menu */
.menu { display: flex; align-items: center; height: 27px; flex: none; padding: 0 4px; background: linear-gradient(#c8d1e0, #aeb9ce); color: #1d2738; }
.menu > button { margin-right: 17px; }
.menu .grip { margin-right: 6px; }
.mdi { margin-left: auto; display: flex; gap: 7px; }
.mdi svg { width: 10px; height: 10px; }
.grip { width: 7px; height: 16px; background: radial-gradient(circle at 1px 1px, #5c6b84 1px, transparent 1px) 1px 1px / 7px 4px; }

/* toolbars */
.bars { flex: none; padding-top: 1px; }
.row { display: flex; gap: 2px; height: 27px; padding-left: 1px; }
.row + .row { height: 26px; }
.strip { display: flex; align-items: center; flex: none; border: 1px solid #cbd4e2; border-right: 0; border-radius: 2px; background: #bcc7d8; }
.tb { width: 22px; height: 22px; display: flex; align-items: center; justify-content: center; flex: none; }
.tb svg { width: 16px; height: 16px; overflow: visible; }
.tb.on { background: #fff6d8; border: 1px solid #e5c365; }
.tb.off svg { filter: grayscale(1); opacity: .5; }
.tb.dd { width: 29px; justify-content: flex-start; padding-left: 3px; }
.tb.dd::after { content: ""; margin-left: 2px; border: 3px solid transparent; border-top-color: #1b293e; border-bottom: 0; }
.tb.dimmed::after { border-top-color: #7a818c; }
.flip { transform: scaleX(-1); }
.sep { width: 6px; height: 20px; background: linear-gradient(#8591a5, #8591a5) center / 1px 100% no-repeat; }
.more { width: 11px; align-self: stretch; margin-left: 4px; background: url("data:image/svg+xml,%3Csvg xmlns='http://www.w3.org/2000/svg' width='7' height='7'%3E%3Cpath d='M1 1h5M1 3h5L3.500 6z' fill='%231b293e' stroke='%231b293e' stroke-width='.8'/%3E%3C/svg%3E") center bottom 3px no-repeat #d5dbe7; }
.more.tight { margin-left: 2px; }
.combo { height: 22px; border: 1px solid #fff; padding: 0 18px 0 3px; color: #000; background: url("data:image/svg+xml,%3Csvg xmlns='http://www.w3.org/2000/svg' width='12' height='20'%3E%3Cpath d='M0 0h12v20H0z' fill='%23bcc7d8'/%3E%3Cpath d='M2 9h8l-4 4z' fill='%231b293e'/%3E%3C/svg%3E") right center no-repeat #fff; }
.w-find { width: 98px; }
.w-zoom { width: 68px; }
.w-scan { width: 129px; }
.w-all { width: 98px; }
.combo.gray { width: 199px; height: 24px; margin-left: 2px; border: 1px solid #828790; background: url("data:image/svg+xml,%3Csvg xmlns='http://www.w3.org/2000/svg' width='14' height='20'%3E%3Cpath d='M3 9h8l-4 4z' fill='%23808080'/%3E%3C/svg%3E") right center no-repeat #f0f0f0; }
.lit { margin-left: -1px; border-color: #f0f3fa; border-bottom: 1px solid #b58a2c; background: #f0f4fc; }
.lit .more { margin-left: 3px; background-color: #fdeeb8; }

/* work area */
.work { flex: 1; min-height: 0; display: flex; background: #2d3d5c; }
.phead { display: flex; align-items: center; gap: 8px; height: 24px; flex: none; padding: 0 6px 0 3px; color: #fff; background: linear-gradient(#40547d, #4d6188); }
.phead h2 { flex: 1; }
.pin { width: 10px; height: 12px; }
.ex { width: 9px; height: 9px; }

.nav { width: 297px; flex: none; display: flex; flex-direction: column; }
.navbar { display: flex; align-items: center; height: 28px; flex: none; padding-left: 6px; border: 2px solid #d2d9e4; border-top-color: #8d96a6; background: #bcc7d8; }
.nb { display: flex; align-items: center; justify-content: center; width: 22px; height: 22px; }
.nb svg { width: 16px; height: 16px; }
.nb.wide { width: 25px; }
.nb.wide svg { width: 22px; }
.navbar .combo { margin-left: 2px; }
.treebox { flex: 1; min-height: 0; display: flex; margin-right: 2px; border: 1px solid #6f9ad8; border-bottom: 0; background: #364a6a; }
.tree { flex: 1; min-width: 0; margin: 0; padding: 0 16px 0 1px; list-style: none; overflow: hidden; color: #fff; }
.tree li { display: flex; align-items: center; height: 21px; white-space: nowrap; }
.tree svg { width: 16px; height: 16px; margin-right: 4px; }
.tree .sel { background: #fff2a4; color: #000; }
.l0 { padding-left: 3px; }
.l1 { padding-left: 2px; }
.l2 { padding-left: 16px; }
.l3 { padding-left: 30px; }
.l4 { padding-left: 44px; }
.l5 { padding-left: 58px; }
.tg { width: 9px; height: 9px; margin-right: 6px; }
.box { border: 1px solid #8a94a6; background: linear-gradient(#26406e, #26406e) center / 5px 1px no-repeat #fff; }
.sbar { width: 17px; flex: none; display: flex; flex-direction: column; background: #f0f0f0; }
.up { height: 18px; display: flex; justify-content: center; align-items: center; }
.up::after { content: ""; border: 4px solid transparent; border-bottom-color: #333; border-top: 0; }
.thumb { flex: 1; margin: 0 1px; border: 1px solid #8d8d8d; border-bottom: 0; border-radius: 2px 2px 0 0; }
.nav .thumb { background: repeating-linear-gradient(#555 0 1px, transparent 1px 3px) center 85% / 7px 9px no-repeat, linear-gradient(90deg, #f5f5f5, #cfcfd4); }

.doc { flex: 1; min-width: 0; display: flex; flex-direction: column; margin: 0 5px; }
.tabs { display: flex; height: 23px; flex: none; padding-left: 1px; background: radial-gradient(circle at 1px 1px, #384a6c 1px, transparent 1px) 0 0 / 4px 4px; }
.tab { display: flex; align-items: center; gap: 4px; padding: 0 4px; color: #fff; white-space: nowrap; width: 219px; }
.tab svg { width: 16px; height: 16px; }
.tab.cur { width: 220px; color: #1b1b1b; background: linear-gradient(#fffcf0, #fff0c4 50%, #ffe8a0 50%); }
.tab .ex { width: 9px; height: 9px; margin-left: auto; margin-right: 2px; color: #6b5a2c; }
.tabnav { margin-left: auto; margin-right: 3px; align-self: center; }
.tabnav svg { width: 34px; height: 10px; }
.page { flex: 1; min-height: 0; display: flex; flex-direction: column; border: 3px solid #7a7a7a; border-bottom: 0; border-right: 6px double #b5b5b5; margin-left: 2px; box-shadow: -1px 0 #ffe8a6, 0 -3px #ffe8a6; margin-top: 3px; background: #f0f0f0; }

.form, .fs { font-family: "Liberation Serif", "Noto Sans CJK SC", serif; }
.form { display: grid; grid-template-columns: 119px 368px 157px auto; grid-template-rows: 34px 38px; justify-content: start; padding: 9px 0 3px 13px; align-items: start; color: #000; }
.form > label { display: flex; align-items: center; gap: 5px; height: 28px; }
.form > .f-buf { height: 30px; }
.form input { appearance: none; width: 12px; height: 12px; margin: 0; border: 1px solid #8e8f8f; border-radius: 50%; background: radial-gradient(circle, #e8e8e8 40%, #c8c8c8); }
.form input:checked { background: radial-gradient(circle at 50% 45%, #4fc0e8 0, #14466e 4px, #e6eef4 4px); }
.fs { height: 20px; padding: 0 2px; border: 1px solid #e0e3ea; background: url("data:image/svg+xml,%3Csvg xmlns='http://www.w3.org/2000/svg' width='16' height='10'%3E%3Cpath d='M4 3h8l-4 4z'/%3E%3C/svg%3E") right center no-repeat #fff; color: #000; }
.dev { width: 190px; margin-top: 3px; }
.fs:disabled { border: 1px solid #b0b4ba; border-radius: 2px; color: #555; background: url("data:image/svg+xml,%3Csvg xmlns='http://www.w3.org/2000/svg' width='16' height='10'%3E%3Cpath d='M4 3h8l-4 4z' fill='%23999'/%3E%3C/svg%3E") right center no-repeat #f4f4f4; }
.unit { width: 111px; }
.radix { width: 62px; }
.detail, .halt { border: 1px solid #707070; border-radius: 3px; background: linear-gradient(#f4f4f4, #ececec 48%, #dcdcdc 50%, #cfcfcf); }
.detail { display: flex; align-items: center; justify-content: space-between; width: 144px; height: 23px; margin-top: 5px; padding: 0 2px; }
.detail svg { width: 14px; height: 14px; }
.mon { display: flex; align-items: center; justify-content: center; width: 110px; height: 32px; border: 1px solid #606060; background: #80ff00; }
.halt { width: 108px; height: 30px; margin-left: 1px; }
.f-row { display: flex; align-items: flex-start; padding-top: 4px; }
.dim { color: #444; }
.mod { width: 79px; padding-right: 28px; line-height: 13px; padding-top: 3px; }
.hex { margin: 2px 17px 0 10px; flex: none; width: 48px; }
.f-row .dim:last-child { padding-top: 2px; }
.f-addr { display: flex; gap: 6px; padding-top: 4px; margin-left: -34px; }

.gridbox { flex: 1; min-height: 0; display: flex; border-top: 1px solid #c0c0c0; }
.scroll { flex: 1; min-width: 0; overflow: hidden; }
table { width: 643px; table-layout: fixed; border-collapse: separate; border-spacing: 0; font: 8px/13px "Liberation Sans", "Noto Sans CJK SC", sans-serif; color: #000; }
.c-dev { width: 101px; }
.c-bit { width: 14px; }
.c-last { width: 16px; }
.c-val { width: 185px; }
.c-str { width: 131px; }
th, td { height: 14px; padding: 0; text-align: center; font-weight: normal; border-bottom: 1px solid #808080; border-right: 1px solid #808080; white-space: nowrap; overflow: hidden; }
th { background: linear-gradient(#f0f0f0, #cfcfcf); }
thead th:first-child, thead th:nth-child(n+18) { font-size: 9px; }
th:first-child { text-align: left; padding-left: 3px; }
td { background: #fff; border-right: 1px dotted #404040; }
tr:nth-child(odd) td { background: #edf6ff; }
th:nth-child(17), tr td:nth-child(17) { border-right: 3px double #707070; }
tr td:nth-child(18) { text-align: right; padding-right: 1px; border-right: 1px solid #808080; }
tr td:nth-child(19) { text-align: left; padding-left: 2px; border-right: 1px solid #808080; }
tr:nth-child(n) td.one { background: #0000ff; background-clip: padding-box; color: #fff; }
tr td.cell { box-shadow: inset 0 0 0 1px #ffff00; }
.flat { width: 16px; }
.flat .thumb { flex: none; height: 15px; border: 1px solid #999; border-radius: 2px; background: linear-gradient(90deg, #f6f6f6, #d0d0d4); }

.parts { width: 243px; flex: none; display: flex; flex-direction: column; padding-bottom: 3px; }
.pbar { flex: none; height: 52px; padding: 1px 0 0 4px; background: #bcc7d8; border-left: 1px solid #dfe4ec; border-top: 1px solid #8d96a6; }
.parts .phead { padding-left: 4px; padding-right: 5px; }
.prow { display: flex; align-items: center; }
.prow + .prow { margin-left: -2px; }
.prow input { width: 199px; height: 24px; padding: 0 3px; border: 1px solid #828790; background: #f0f0f0; }
.prow input::placeholder { color: #6b6b6b; opacity: 1; }
.pbody { flex: 1; min-height: 0; display: flex; flex-direction: column; margin-left: 2px; padding: 0 1px 2px 2px; border-top: 2px solid #ffbe6e; border-left: 1px solid #ffbe6e; border-right: 1px solid #0a3c9c; border-bottom: 1px solid #0a3c9c; background: #f0f0f0; }
.ptop { display: flex; justify-content: space-between; height: 23px; padding-left: 7px; align-items: center; flex: none; }
.ptop select { width: 94px; height: 21px; padding: 0 10px; border: 1px solid #707070; border-radius: 3px; background: url("data:image/svg+xml,%3Csvg xmlns='http://www.w3.org/2000/svg' width='14' height='10'%3E%3Cpath d='M3 3h7l-3.500 4z'/%3E%3C/svg%3E") right center no-repeat, linear-gradient(#f4f4f4 48%, #dcdcdc 50%, #cfcfcf); }
.plist { flex: 1; background: #fff; border: 1px solid #6f9ad8; border-bottom: 4px solid #364a6a; }
.pinfo { height: 38px; flex: none; background: #d6e7ff; border: 1px solid #6f9ad8; }
.ptabs { display: flex; gap: 2px; height: 24px; flex: none; margin-left: 2px; background: linear-gradient(#f4f8ff, #cfdff8); }
.ptabs button { padding: 0 4px; height: 21px; border: solid #0a3c9c; border-width: 0 2px 2px 0; border-radius: 0 0 3px 3px; background: linear-gradient(#a8c4f4, #dbe7fb); color: #000; }
.ptabs .cur { width: 62px; height: 23px; margin-right: -1px; border-right: 0; background: linear-gradient(#ffc27a, #ffe6c6); }
```
FILE: rows.js
```
// Device name suffix, word value and its character form.
const words = [
  [27, 2, '..'], [28, 513, '..'], [29, 0, '..'], [30, 26592, '郬'], [31, 1000, '?'],
  [32, 32, ' .'], [33, 32, ' .'], [34, 4, '..'], [35, 4, '..'], [36, 1, '..'],
  [37, 0, '..'], [38, 0, '..'], [39, 0, '..'], [40, 0, '..'], [41, 0, '..'],
  [42, 0, '..'], [43, 0, '..'],
];
const body = document.getElementById('rows');
for (const [n, value, chars] of words) {
  const row = body.insertRow();
  const head = document.createElement('th');
  head.textContent = 'U1\\G' + n;
  row.append(head);
  for (let bit = 15; bit >= 0; bit--) {
    const on = (value >> bit) & 1;
    const cell = row.insertCell();
    cell.textContent = on;
    if (on) cell.className = 'one';
    if (n === 27 && bit === 1) cell.className = 'one cell';
  }
  row.insertCell().textContent = value;
  row.insertCell().textContent = chars;
}
```
